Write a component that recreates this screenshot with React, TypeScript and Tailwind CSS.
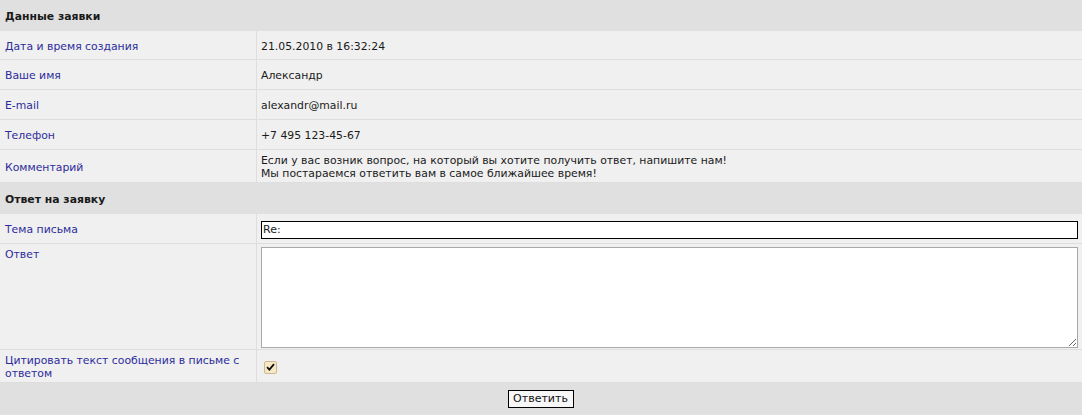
import React from 'react';

// Simple label / value row of the request form
interface RowProps {
  label: React.ReactNode;
  children?: React.ReactNode;
  className?: string;
  top?: boolean;
}

const Row: React.FC<RowProps> = ({ label, children, className = 'h-[30px]', top }) => {
  return (
    <div className={`flex border-b border-[#dedede] bg-[#f0f0f0] ${className}`}>
      <div
        className={`w-[257px] shrink-0 border-r border-[#dedede] pl-[5px] pr-2 text-[#2c2c9c] flex ${
          top ? 'items-start pt-[4px]' : 'items-center pt-[2px]'
        }`}
      >
        {label}
      </div>
      <div className={`flex-1 pl-[4px] pr-[3px] text-[#1a1a1a] flex ${top ? 'items-start' : 'items-center pt-[2px]'}`}>
        {children}
      </div>
    </div>
  );
};

const SectionHeader: React.FC<{ title: string; className?: string }> = ({ title, className = 'h-[30px]' }) => (
  <div className={`flex items-center bg-[#e0e0e0] pl-[5px] pt-[2px] font-bold text-[#1a1a1a] ${className}`}>{title}</div>
);

const App: React.FC = () => {
  return (
    <div
      className="w-[1082px] h-[415px] bg-[#f0f0f0] text-[10.85px] leading-[13px] overflow-hidden"
      style={{ fontFamily: '"DejaVu Sans", Verdana, sans-serif' }}
    >
      {/* Request data */}
      <SectionHeader title="Данные заявки" className="h-[31px]" />
      <Row label="Дата и время создания" className="h-[29px]">21.05.2010 в 16:32:24</Row>
      <Row label="Ваше имя">Александр</Row>
      <Row label="E-mail">alexandr@mail.ru</Row>
      <Row label="Телефон">+7 495 123-45-67</Row>
      <Row label="Комментарий" className="h-[33px]">
        <div>
          Если у вас возник вопрос, на который вы хотите получить ответ, напишите нам!
          <br />
          Мы постараемся ответить вам в самое ближайшее время!
        </div>
      </Row>

      {/* Answer */}
      <SectionHeader title="Ответ на заявку" className="h-[31px]" />
      <Row label="Тема письма">
        <input
          defaultValue="Re:"
          className="w-[817px] h-[18px] border border-black bg-white px-[1px] text-[11px] outline-none"
          style={{ fontFamily: '"DejaVu Sans", Verdana, sans-serif' }}
        />
      </Row>
      <Row label="Ответ" className="h-[106px]" top>
        <textarea className="mt-[3px] w-[817px] h-[101px] border border-[#a9a9a9] bg-white outline-none resize" />
      </Row>
      <Row
        label={
          <span className="leading-[13px]">
            Цитировать текст сообщения в письме с
            <br />
            ответом
          </span>
        }
        className="h-[33px]"
      >
        <span className="ml-[3px] flex h-[13px] w-[13px] items-center justify-center rounded-[2px] border border-[#cdb98f] bg-[#f7e9c6]">
          <svg width="9" height="8" viewBox="0 0 9 8">
            <path d="M1 4.2 L3.4 6.6 L8 1.2" fill="none" stroke="#111" strokeWidth="1.8" />
          </svg>
        </span>
      </Row>

      {/* Footer with submit */}
      <div className="flex h-[32px] items-center justify-center bg-[#e0e0e0]">
        <button
          className="ml-[-1px] h-[18px] w-[66px] border border-black bg-[#f7f7f7] text-[11px] leading-[14px] text-[#111]"
          style={{ fontFamily: '"DejaVu Sans", Verdana, sans-serif' }}
        >
          Ответить
        </button>
      </div>
    </div>
  );
};

export default App;
